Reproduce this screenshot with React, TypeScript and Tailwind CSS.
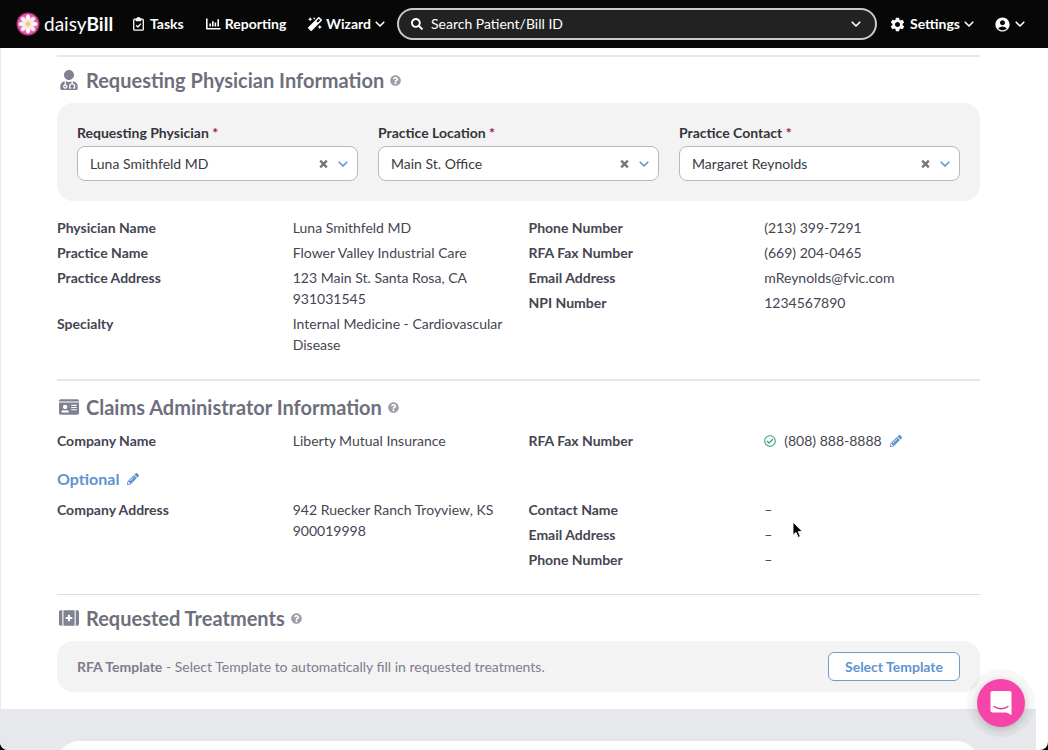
import { useState } from "react";
import type { ReactNode } from "react";
import { FaIdCard, FaPencilAlt, FaRegCheckCircle, FaSearch, FaQuestionCircle, FaUserMd, FaFirstAid, FaMagic } from "react-icons/fa";
import { MdSettings, MdAccountCircle } from "react-icons/md";

type Row = { label: string; value: ReactNode };

const physicianRows: Row[] = [
  { label: "Physician Name", value: "Luna Smithfeld MD" },
  { label: "Practice Name", value: "Flower Valley Industrial Care" },
  { label: "Practice Address", value: "123 Main St. Santa Rosa, CA 931031545" },
  { label: "Specialty", value: "Internal Medicine - Cardiovascular Disease" },
];

const contactRows: Row[] = [
  { label: "Phone Number", value: "(213) 399-7291" },
  { label: "RFA Fax Number", value: "(669) 204-0465" },
  { label: "Email Address", value: "mReynolds@fvic.com" },
  { label: "NPI Number", value: "1234567890" },
];

const emptyRows: Row[] = [
  { label: "Contact Name", value: "–" },
  { label: "Email Address", value: "–" },
  { label: "Phone Number", value: "–" },
];

export default function App() {
  const [query, setQuery] = useState("");

  return (
    <div className="h-screen bg-black font-['Lato',sans-serif] text-sm">
      <div className="flex h-full flex-col overflow-hidden rounded-b-lg bg-white">
        <header className="flex h-12 shrink-0 items-center bg-[#070707] pl-4 pr-[23px] font-bold text-white">
          <a href="#" className="flex w-[117px] items-center gap-1 text-[19px] leading-6">
            <DaisyLogo />
            <span>
              <span className="font-normal">daisy</span>Bill
            </span>
          </a>
          <nav className="flex items-center gap-[22px]">
            <a href="#" className="flex items-center gap-1.5">
              <ClipboardIcon />
              Tasks
            </a>
            <a href="#" className="flex items-center gap-1">
              <ChartIcon />
              Reporting
            </a>
            <button className="flex items-center gap-1">
              <FaMagic size={14} />
              Wizard
              <Chevron />
            </button>
          </nav>
          <div className="ml-3 flex h-8 min-w-0 flex-1 items-center rounded-full border-2 border-[#c9c9c9] bg-[#222] pl-3 pr-3.5">
            <FaSearch size={12} />
            <input
              aria-label="Search Patient/Bill ID"
              placeholder="Search Patient/Bill ID"
              value={query}
              onChange={(e) => setQuery(e.target.value)}
              className="ml-2 min-w-0 flex-1 bg-transparent font-normal outline-none placeholder:text-white"
            />
            <button aria-label="Search options">
              <Chevron />
            </button>
          </div>
          <button className="ml-3 flex items-center gap-1">
            <MdSettings size={17} />
            Settings
            <Chevron />
          </button>
          <button aria-label="Account" className="ml-5 flex items-center gap-1">
            <MdAccountCircle size={17} />
            <Chevron />
          </button>
        </header>

        <main className="mr-3 flex flex-1 flex-col">
          <div className="border-l border-[#ececf0] px-14 pb-[17px] pt-[7px] text-[#454552]">
            <section className="border-t-2 border-[#e6e6ec] pb-6 pt-[9px]">
              <Heading icon={<FaUserMd size={20} />}>Requesting Physician Information</Heading>
              <div className="grid grid-cols-3 gap-5 rounded-2xl bg-[#f3f3f3] p-5">
                <Picker id="physician" label="Requesting Physician" value="Luna Smithfeld MD" />
                <Picker id="location" label="Practice Location" value="Main St. Office" />
                <Picker id="contact" label="Practice Contact" value="Margaret Reynolds" />
              </div>
              <div className="mt-4 grid grid-cols-2 gap-5">
                <Details rows={physicianRows} />
                <Details rows={contactRows} />
              </div>
            </section>

            <section className="border-t-2 border-[#e6e6ec] pb-6 pt-3">
              <Heading icon={<FaIdCard size={20} />}>Claims Administrator Information</Heading>
              <div className="grid grid-cols-2 gap-5">
                <Details rows={[{ label: "Company Name", value: "Liberty Mutual Insurance" }]} />
                <Details rows={[{ label: "RFA Fax Number", value: <FaxValue /> }]} />
              </div>
              <button className="mt-4 flex items-center gap-2 text-base leading-6 font-bold text-[#5f93cf]">
                Optional
                <FaPencilAlt size={12} />
              </button>
              <div className="mt-2 grid grid-cols-2 gap-5">
                <Details rows={[{ label: "Company Address", value: "942 Ruecker Ranch Troyview, KS 900019998" }]} />
                <Details rows={emptyRows} />
              </div>
            </section>

            <section className="border-t border-[#dcdce2] pt-[9px]">
              <Heading icon={<FaFirstAid size={20} />}>Requested Treatments</Heading>
              <div className="flex items-center justify-between rounded-2xl bg-[#f3f3f3] px-5 py-[11px] text-[#7d7d8c]">
                <p>
                  <b>RFA Template</b> - Select Template to automatically fill in requested treatments.
                </p>
                <button className="h-[29px] rounded-md border border-[#6f9bd0] bg-white px-4 font-bold text-[#5f93cf]">
                  Select Template
                </button>
              </div>
            </section>
          </div>

          <div className="flex-1 bg-[#e7e8ec] px-14 pt-8">
            <div className="h-40 rounded-3xl bg-white" />
          </div>
        </main>
      </div>

      <button
        aria-label="Open chat"
        className="fixed bottom-[23px] right-[23px] flex size-12 items-center justify-center rounded-full bg-[#f545a8] shadow-[0_0_0_10px_rgba(0,0,0,0.03),0_2px_8px_rgba(0,0,0,0.2)]"
      >
        <ChatIcon />
      </button>
      <Pointer />
    </div>
  );
}

function Heading({ icon, children }: { icon: ReactNode; children: ReactNode }) {
  return (
    <h2 className="mb-[9px] flex items-center text-xl leading-7 font-bold text-[#6e6f7d]">
      <span className="flex w-6 shrink-0 justify-center text-[#808291]">{icon}</span>
      <span className="ml-[5px]">{children}</span>
      <FaQuestionCircle size={11} className="ml-1.5 text-[#9d9eaa]" />
    </h2>
  );
}

function Picker({ id, label, value }: { id: string; label: string; value: string }) {
  const [selected, setSelected] = useState(value);

  return (
    <div>
      <label htmlFor={id} className="mb-[3px] block leading-5 font-bold text-[#35353b]">
        {label} <span className="text-[#a5123f]">*</span>
      </label>
      <div className="relative">
        <select
          id={id}
          value={selected}
          onChange={(e) => setSelected(e.target.value)}
          className="block h-[35px] w-full appearance-none rounded-lg border border-[#b9b9bd] bg-white pl-3 pr-12 text-[#3a3a3f] outline-none"
        >
          <option value="" />
          <option value={value}>{value}</option>
        </select>
        <button
          aria-label={`Clear ${label}`}
          onClick={() => setSelected("")}
          className="absolute right-[30px] top-1/2 -translate-y-1/2 text-[#777]"
        >
          <svg width="9" height="9" viewBox="0 0 9 9" stroke="currentColor" strokeWidth="2.4">
            <path d="M1.2 1.2l6.6 6.6M7.8 1.2L1.2 7.8" />
          </svg>
        </button>
        <span className="pointer-events-none absolute right-2.5 top-1/2 -translate-y-1/2 text-[#5a93cf]">
          <Chevron />
        </span>
      </div>
    </div>
  );
}

function Details({ rows }: { rows: Row[] }) {
  return (
    <dl className="grid grid-cols-2 content-start gap-x-5 gap-y-1 leading-[21px]">
      {rows.map((row) => (
        <div key={row.label} className="contents">
          <dt className="font-bold">{row.label}</dt>
          <dd>{row.value}</dd>
        </div>
      ))}
    </dl>
  );
}

function FaxValue() {
  return (
    <span className="flex items-center gap-2">
      <FaRegCheckCircle size={12} className="text-[#3fa283]" />
      (808) 888-8888
      <button aria-label="Edit fax number" className="text-[#5f93cf]">
        <FaPencilAlt size={12} />
      </button>
    </span>
  );
}

function Chevron() {
  return (
    <svg width="10" height="10" viewBox="0 0 10 10" fill="none" stroke="currentColor" strokeWidth="1.6" strokeLinecap="round" strokeLinejoin="round">
      <path d="M1.2 3.2L5 7l3.8-3.8" />
    </svg>
  );
}

function ClipboardIcon() {
  return (
    <svg width="11" height="14" viewBox="0 0 11 14" fill="none" stroke="currentColor" strokeWidth="1.3" strokeLinejoin="round">
      <rect x="0.7" y="2.2" width="9.6" height="11" rx="1" />
      <path d="M3.3 2.2c.6 0 .8-1.5 2.2-1.5s1.6 1.5 2.2 1.5v1.5H3.3z" fill="currentColor" />
      <path d="M3.2 8.3l1.7 1.7 3-3.4" />
    </svg>
  );
}

function ChartIcon() {
  return (
    <svg width="15" height="12" viewBox="0 0 15 12" fill="currentColor">
      <path d="M0 .5h1.6v9.4H14.5v1.6H1a1 1 0 0 1-1-1z" />
      <path d="M3.4 5.6h1.6v3H3.4zM6 3.2h1.6v5.4H6zM8.6 4.6h1.6v4H8.6zM11.4 1.2H13v7.4h-1.6z" />
    </svg>
  );
}

function DaisyLogo() {
  const petals = [0, 45, 90, 135, 180, 225, 270, 315];
  return (
    <svg width="24" height="24" viewBox="0 0 24 24">
      <circle cx="12" cy="12" r="11.5" fill="#a82a72" />
      <circle cx="12" cy="12" r="10.5" fill="#dd5aa4" />
      {petals.map((angle) => (
        <ellipse key={angle} cx="12" cy="6.8" rx="2.3" ry="4.3" fill="#fdf1f7" stroke="#eda6cb" strokeWidth="0.4" transform={`rotate(${angle} 12 12)`} />
      ))}
      <circle cx="12" cy="12" r="2.4" fill="#f3cf5c" />
    </svg>
  );
}

function ChatIcon() {
  return (
    <svg width="24" height="26" viewBox="0 0 24 26">
      <path d="M3.5 1h17A2 2 0 0 1 22.500 3v22l-5-2.500h-14A2 2 0 0 1 1.500 20.500V3a2 2 0 0 1 2-2z" fill="#fff" />
      <path d="M5 16.500c4 3 10 3 14 0" fill="none" stroke="#d73b95" strokeWidth="1.3" strokeLinecap="round" />
    </svg>
  );
}

function Pointer() {
  return (
    <svg className="pointer-events-none fixed left-[792px] top-[521px]" width="12" height="18" viewBox="0 0 12 18">
      <path d="M1 1v13.200l3-2.800 2.200 5 2.200-1-2.200-4.800h4.100z" fill="#000" stroke="#fff" strokeWidth="0.9" />
    </svg>
  );
}
